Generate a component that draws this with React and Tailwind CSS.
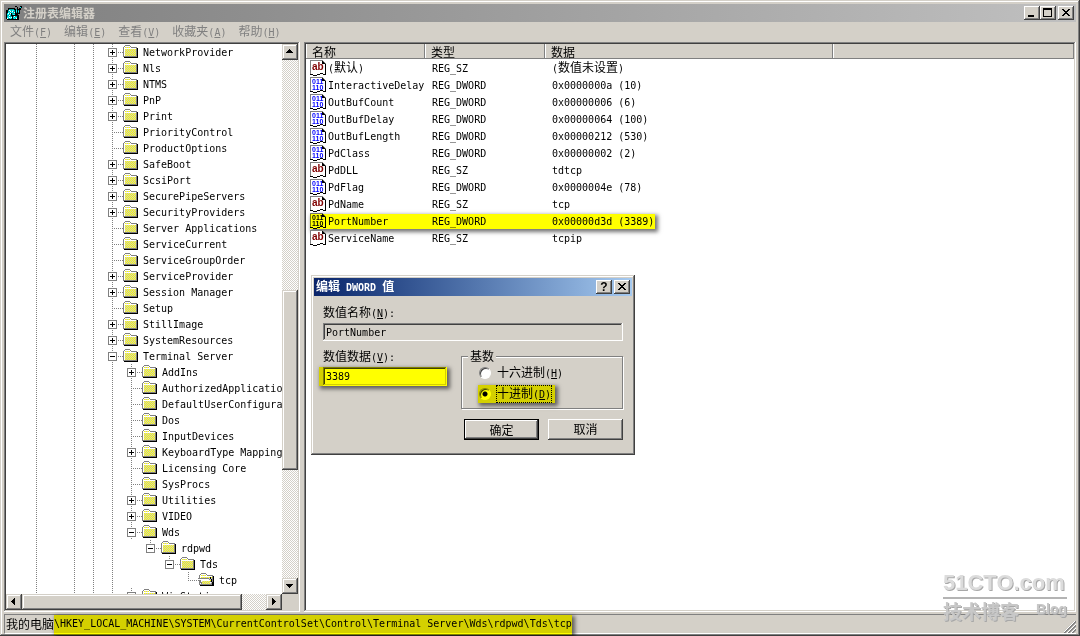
import React, { useState } from "react";

const raised =
  "bg-[#d4d0c8] shadow-[inset_-1px_-1px_#404040,inset_1px_1px_#d4d0c8,inset_-2px_-2px_#808080,inset_2px_2px_#fff]";
const raisedThin =
  "bg-[#d4d0c8] shadow-[inset_-1px_-1px_#404040,inset_1px_1px_#fff,inset_-2px_-2px_#808080]";
const sunken =
  "p-[2px] shadow-[inset_-1px_-1px_#fff,inset_1px_1px_#808080,inset_-2px_-2px_#d4d0c8,inset_2px_2px_#404040]";
const dither =
  "bg-[conic-gradient(#fff_25%,#d4d0c8_0_50%,#fff_0_75%,#d4d0c8_0)] bg-[length:2px_2px]";
const dotsV = "bg-[repeating-linear-gradient(180deg,#808080_0_1px,transparent_1px_2px)]";
const dotsH = "bg-[repeating-linear-gradient(90deg,#808080_0_1px,transparent_1px_2px)]";
const mono = "font-['DejaVu_Sans_Mono','Noto_Sans_CJK_SC',monospace] text-[10px]";
const marker =
  "absolute bg-[#ff0] mix-blend-multiply shadow-[2px_2px_4px_1px_rgba(0,0,0,0.55)] pointer-events-none";

// guides: which ancestor columns carry a line on this row
const A = [1, 0, 1, 1];
const B = [1, 0, 1, 1, 1];
const tree = [
  { name: "NetworkProvider", guides: A, sign: "+" },
  { name: "Nls", guides: A, sign: "+" },
  { name: "NTMS", guides: A, sign: "+" },
  { name: "PnP", guides: A, sign: "+" },
  { name: "Print", guides: A, sign: "+" },
  { name: "PriorityControl", guides: A },
  { name: "ProductOptions", guides: A },
  { name: "SafeBoot", guides: A, sign: "+" },
  { name: "ScsiPort", guides: A, sign: "+" },
  { name: "SecurePipeServers", guides: A, sign: "+" },
  { name: "SecurityProviders", guides: A, sign: "+" },
  { name: "Server Applications", guides: A },
  { name: "ServiceCurrent", guides: A },
  { name: "ServiceGroupOrder", guides: A },
  { name: "ServiceProvider", guides: A, sign: "+" },
  { name: "Session Manager", guides: A, sign: "+" },
  { name: "Setup", guides: A },
  { name: "StillImage", guides: A, sign: "+" },
  { name: "SystemResources", guides: A, sign: "+" },
  { name: "Terminal Server", guides: A, sign: "-" },
  { name: "AddIns", guides: B, sign: "+" },
  { name: "AuthorizedApplications", guides: B },
  { name: "DefaultUserConfiguration", guides: B },
  { name: "Dos", guides: B },
  { name: "InputDevices", guides: B },
  { name: "KeyboardType Mapping", guides: B, sign: "+" },
  { name: "Licensing Core", guides: B },
  { name: "SysProcs", guides: B },
  { name: "Utilities", guides: B, sign: "+" },
  { name: "VIDEO", guides: B, sign: "+" },
  { name: "Wds", guides: B, sign: "-" },
  { name: "rdpwd", guides: [...B, 1], sign: "-", last: true },
  { name: "Tds", guides: [...B, 1, 0], sign: "-", last: true },
  { name: "tcp", guides: [...B, 1, 0, 0], last: true, open: true },
  { name: "WinStations", guides: B, sign: "+" },
];

const values = [
  { name: "(默认)", type: "REG_SZ", data: "(数值未设置)" },
  { name: "InteractiveDelay", type: "REG_DWORD", data: "0x0000000a (10)" },
  { name: "OutBufCount", type: "REG_DWORD", data: "0x00000006 (6)" },
  { name: "OutBufDelay", type: "REG_DWORD", data: "0x00000064 (100)" },
  { name: "OutBufLength", type: "REG_DWORD", data: "0x00000212 (530)" },
  { name: "PdClass", type: "REG_DWORD", data: "0x00000002 (2)" },
  { name: "PdDLL", type: "REG_SZ", data: "tdtcp" },
  { name: "PdFlag", type: "REG_DWORD", data: "0x0000004e (78)" },
  { name: "PdName", type: "REG_SZ", data: "tcp" },
  { name: "PortNumber", type: "REG_DWORD", data: "0x00000d3d (3389)", marked: true },
  { name: "ServiceName", type: "REG_SZ", data: "tcpip" },
];

const menus = [
  ["文件", "F"],
  ["编辑", "E"],
  ["查看", "V"],
  ["收藏夹", "A"],
  ["帮助", "H"],
];

// Chinese runs are 12px wide per character, latin runs 6px
const Txt = ({ children }) => (
  <>
    {children.split(/([\x20-\x7e]+)/).map((part, i) =>
      i % 2 ? (
        <span key={i} className={mono}>
          {part}
        </span>
      ) : (
        part
      )
    )}
  </>
);

const Key = ({ k, tail = "" }) => (
  <span className={mono}>
    (<u>{k}</u>){tail}
  </span>
);

const Arrow = ({ dir }) => {
  const d = {
    up: "M4 9h7v-1h-1v-1h-1v-1h-1v-1h-1v1h-1v1h-1v1h-1z",
    down: "M4 6h7v1h-1v1h-1v1h-1v1h-1v-1h-1v-1h-1v-1h-1z",
    left: "M9 4v7h-1v-1h-1v-1h-1v-1h-1v-1h1v-1h1v-1h1v-1z",
    right: "M6 4v7h1v-1h1v-1h1v-1h1v-1h-1v-1h-1v-1h-1v-1z",
  }[dir];
  return (
    <svg width="16" height="16" shapeRendering="crispEdges">
      <path d={d} />
    </svg>
  );
};

const ScrollButton = ({ dir }) => (
  <button aria-label={dir} className={`size-4 shrink-0 ${raised}`}>
    <Arrow dir={dir} />
  </button>
);

const Folder = ({ open }) => (
  <svg width="16" height="16" className="shrink-0" shapeRendering="crispEdges">
    <defs>
      <pattern id="dither" width="2" height="2" patternUnits="userSpaceOnUse">
        <rect width="2" height="2" fill="#c8c8c8" />
        <rect width="1" height="1" fill="#ff0" />
        <rect x="1" y="1" width="1" height="1" fill="#ff0" />
      </pattern>
    </defs>
    <path d="M2 13h13V4h1v10H2z" fill="#000" />
    <path d="M1 3h1V2h1V1h5v1h1v1h6v10H1z" fill="#808080" />
    <path d="M2 3h1V2h5v1h1v1h5v8H2z" fill="#fff" />
    <path d="M3 3h5v1H3zM3 5h11v7H3z" fill="url(#dither)" />
    {open && (
      <>
        <path d="M0 6h11v1h1v2h1v2h1v2H3v-2H2v-2H1V7H0z" fill="#808080" />
        <path d="M1 7h10v1h1v2h1v2H4v-2H3V8H1z" fill="#fff" />
        <path d="M4 9h8v2h1v1H4z" fill="url(#dither)" />
        <path d="M12 5h1v2h1v3h1v3h-1v-3h-1V7h-1z" fill="#000" />
      </>
    )}
  </svg>
);

const ValueIcon = ({ type }) => (
  <svg width="16" height="16" className="shrink-0" aria-hidden="true">
    <g shapeRendering="crispEdges">
      <path d="M0 0h12l4 4v11h-3v-1h-3v1H7v1H3v-1H0z" fill="#808080" />
      <path d="M1 1h11v3h3v10h-2v-1h-3v1H7v1H3v-1H1z" fill="#fff" />
      <path d="M12 1v3h3v-1h-1v-1h-1v-1zM15 4h1v11h-3v-1h2zM0 14h3v1h4v-1h3v-1h3v1h-3v1H7v1H3v-1H0z" fill="#000" />
    </g>
    {type === "REG_SZ" ? (
      <text x="2" y="10" className="fill-[#800000] font-['Liberation_Sans',sans-serif] text-[10px] font-bold">
        ab
      </text>
    ) : (
      <g className="fill-[#0000ff] font-['Liberation_Sans',sans-serif] text-[7px] font-bold">
        <text x="2" y="7">011</text>
        <text x="2" y="13">110</text>
      </g>
    )}
  </svg>
);

const RegIcon = () => (
  <svg width="16" height="16" shapeRendering="crispEdges" aria-hidden="true">
    <path d="M2 3h7v1h2V2H9V1h2v1h1v2h1V3h1V1h2v2h-1v2h-1v4h-2v1h1v5H1v-1H0V5h2z" fill="#000" />
    <path d="M3 4h5v1H3zM2 5h7v3H2zM1 8h4v3H1zM1 11h5v3H1zM6 8h3v2H6zM7 11h4v3H7zM10 4h1v4h-1zM12 5h1v3h-1zM14 2h1v1h-1z" fill="#00a8a8" />
    <path d="M3 5h2v1H3zM6 5h2v1H6zM2 7h2v1H2zM5 7h2v1H5zM1 9h2v1H1zM4 9h1v1H4zM1 12h2v1H1zM4 12h2v1H4zM7 12h1v1H7zM9 12h2v1H9zM7 9h2v1H7zM10 5h1v2h-1zM12 6h1v1h-1zM14 2h1v1h-1zM2 11h1v1H2zM4 13h1v1H4zM8 13h1v1H8z" fill="#0ff" />
    <path d="M3 5h1v1H3zM6 6h1v1H6zM4 6h1v1H4zM8 7h1v1H8zM2 8h1v1H2zM4 8h1v1H4zM3 10h1v1H3zM5 12h1v1H5zM3 12h1v1H3zM1 13h1v1H1zM8 11h1v1H8zM10 13h1v1h-1z" fill="#fff" />
  </svg>
);

const TreeRow = ({ node }) => {
  const depth = node.guides.length;
  return (
    <li className="flex h-4 items-start whitespace-pre pl-[21px]">
      {node.guides.map((line, i) => (
        // the columns right of the Wds branch stay empty
        <span key={i} className="flex h-4 w-[19px] shrink-0 pl-[9px]">
          {line && !(depth > 5 && i === 5) ? <i className={`h-4 w-px ${dotsV}`} /> : null}
        </span>
      ))}
      <span className="relative h-4 w-[19px] shrink-0">
        <i className={`absolute left-[9px] top-0 w-px ${dotsV} ${node.last ? "h-2" : "h-4"}`} />
        <i className={`absolute left-[9px] top-2 h-px w-[11px] ${dotsH}`} />
        {node.sign && (
          <svg width="9" height="9" className="absolute left-[5px] top-1" shapeRendering="crispEdges">
            <rect width="9" height="9" fill="#808080" />
            <rect x="1" y="1" width="7" height="7" fill="#fff" />
            <path d={node.sign === "+" ? "M2 4h5v1H2zM4 2h1v5H4z" : "M2 4h5v1H2z"} />
          </svg>
        )}
      </span>
      <Folder open={node.open} />
      <span className={`pl-[5px] leading-[18px] ${mono}`}>{node.name}</span>
    </li>
  );
};

const TreePane = () => (
  <aside className={`flex w-[296px] shrink-0 flex-col bg-white ${sunken}`}>
    <div className="flex min-h-0 flex-1">
      <ul className="min-w-0 flex-1 overflow-hidden">
        {tree.map((node) => (
          <TreeRow key={node.name} node={node} />
        ))}
      </ul>
      <div className={`flex w-4 shrink-0 flex-col ${dither}`}>
        <ScrollButton dir="up" />
        <div className="grow-[230]" />
        <div className={`grow-[180] ${raised}`} />
        <div className="grow-[108]" />
        <ScrollButton dir="down" />
      </div>
    </div>
    <div className="flex h-4 shrink-0 bg-[#d4d0c8]">
      <div className={`flex flex-1 ${dither}`}>
        <ScrollButton dir="left" />
        <div className={`grow-[220] ${raised}`} />
        <div className="grow-[24]" />
        <ScrollButton dir="right" />
      </div>
      <div className="w-4" />
    </div>
  </aside>
);

const ValuePane = () => (
  <main className={`min-w-0 flex-1 overflow-hidden bg-white ${sunken}`}>
    <table className="w-full table-fixed border-collapse whitespace-pre text-left leading-4">
      <colgroup>
        <col className="w-[119px]" />
        <col className="w-[120px]" />
        <col className="w-[288px]" />
        <col />
      </colgroup>
      <thead>
        <tr className="h-[15px] bg-[#d4d0c8]">
          {["名称", "类型", "数据", ""].map((title, i) => (
            <th
              key={i}
              className="h-[15px] p-0 pl-[6px] font-normal shadow-[inset_-1px_-1px_#808080,inset_1px_0_#fff]"
            >
              <div className="h-[15px] leading-[15px]">{title}</div>
            </th>
          ))}
        </tr>
      </thead>
      <tbody>
        {values.map((v) => (
          <tr key={v.name} className="h-[17px]">
            <td className="relative p-0">
              <div className="flex h-[17px] items-center pl-1">
                <ValueIcon type={v.type} />
                <span className="pl-[2px]">
                  <Txt>{v.name}</Txt>
                </span>
              </div>
              {v.marked && <i className={`left-1 top-[2px] h-[15px] w-[345px] ${marker}`} />}
            </td>
            <td className="p-0 pl-[7px]">
              <div className="h-[17px] leading-4">
                <Txt>{v.type}</Txt>
              </div>
            </td>
            <td className="p-0 pl-[7px]">
              <div className="h-[17px] leading-4">
                <Txt>{v.data}</Txt>
              </div>
            </td>
            <td />
          </tr>
        ))}
      </tbody>
    </table>
  </main>
);

const EditDialog = () => {
  const [value, setValue] = useState("3389");
  const [base, setBase] = useState("dec");
  const radio =
    "size-3 appearance-none rounded-full border border-[#808080] border-r-white border-b-white bg-white shadow-[inset_1px_1px_#404040] checked:bg-[radial-gradient(circle,#000_2px,#fff_3px)]";

  return (
    <section
      role="dialog"
      aria-label="编辑 DWORD 值"
      className={`absolute left-[311px] top-[275px] h-[180px] w-[324px] p-[3px] ${raised}`}
    >
      <header className="flex h-[18px] items-center bg-linear-to-r from-[#0a246a] to-[#a6caf0] pl-[2px] pr-[2px]">
        <h2 className="flex-1 whitespace-pre font-bold leading-[18px] text-white">
          <Txt>编辑 DWORD 值</Txt>
        </h2>
        <button
          aria-label="帮助"
          className={`mr-[2px] h-[14px] w-4 font-['Liberation_Sans',sans-serif] text-[12px] font-bold leading-[14px] ${raisedThin}`}
        >
          ?
        </button>
        <button aria-label="关闭" className={`h-[14px] w-4 ${raisedThin}`}>
          <CloseMark />
        </button>
      </header>
      <form className="px-[9px] pt-2 leading-4" onSubmit={(e) => e.preventDefault()}>
        <label htmlFor="valueName" className="block h-4">
          数值名称
          <Key k="N" tail=":" />
        </label>
        <input
          id="valueName"
          readOnly
          value="PortNumber"
          className={`mt-[3px] block h-[18px] w-full bg-transparent pl-[3px] outline-none ${sunken} ${mono}`}
        />
        <div className="mt-[7px] flex">
          <div className="w-[138px]">
            <label htmlFor="valueData" className="block h-4">
              数值数据
              <Key k="V" tail=":" />
            </label>
            <div className="relative mt-[3px] w-[124px]">
              <input
                id="valueData"
                value={value}
                onChange={(e) => setValue(e.target.value)}
                className={`block h-[19px] w-full bg-white pl-[3px] outline-none ${sunken} ${mono}`}
              />
              <i className={`-left-1 right-0 top-0 h-[19px] ${marker}`} />
            </div>
          </div>
          <fieldset className="h-[61px] flex-1 border border-[#808080] pl-[17px] shadow-[inset_1px_1px_#fff,1px_1px_#fff]">
            <legend className="-ml-[11px] h-4 bg-[#d4d0c8] px-[2px]">基数</legend>
            <label className="flex h-[18px] items-center gap-[5px]">
              <input
                type="radio"
                name="base"
                checked={base === "hex"}
                onChange={() => setBase("hex")}
                className={radio}
              />
              <span className="px-px">
                十六进制
                <Key k="H" />
              </span>
            </label>
            <label className="relative mt-[3px] flex h-[18px] w-[76px] items-center gap-[5px]">
              <input
                type="radio"
                name="base"
                checked={base === "dec"}
                onChange={() => setBase("dec")}
                className={radio}
              />
              <span className="outline-1 outline-dotted outline-black -outline-offset-1 px-px">
                十进制
                <Key k="D" />
              </span>
              <i className={`-left-px top-0 h-[18px] w-[77px] ${marker}`} />
            </label>
          </fieldset>
        </div>
        <div className="mt-[10px] flex justify-end gap-[9px]">
          <button className="h-[21px] w-[75px] border border-black bg-[#d4d0c8] leading-4 shadow-[inset_-1px_-1px_#404040,inset_1px_1px_#fff,inset_-2px_-2px_#808080]">
            确定
          </button>
          <button className={`h-[21px] w-[75px] pb-[2px] leading-4 ${raisedThin}`}>取消</button>
        </div>
      </form>
    </section>
  );
};

const CloseMark = () => (
  <svg width="16" height="14" shapeRendering="crispEdges">
    <path d="M4 3h2v1h1v1h2v-1h1v-1h2v1h-1v1h-1v1h-1v1h1v1h1v1h1v1h-2v-1h-1v-1h-2v1h-1v1h-2v-1h1v-1h1v-1h1v-1h-1v-1h-1v-1h-1z" />
  </svg>
);

const Watermark = () => (
  <div className="pointer-events-none absolute bottom-[9px] right-[13px] w-[124px] font-['Liberation_Sans','Noto_Sans_CJK_SC',sans-serif] font-bold text-[#dcdcdc] [text-shadow:1px_1px_#a8a8a8]">
    <div className="whitespace-nowrap text-[22px] leading-7">51CTO.com</div>
    <div className="h-[2px] bg-[#b4b4b4]" />
    <div className="flex justify-between text-[#c8c8c8]">
      <span className="text-[19px] leading-7">技术博客</span>
      <span className="text-[14px] leading-5">Blog</span>
    </div>
  </div>
);

const App = () => {
  return (
    <div
      className="relative flex h-screen w-full flex-col overflow-hidden bg-[#d4d0c8] p-1 pb-[2px] font-['Noto_Sans_CJK_SC',sans-serif] text-[12px] text-black shadow-[inset_-1px_-1px_#404040,inset_1px_1px_#d4d0c8,inset_-2px_-2px_#808080,inset_2px_2px_#fff]"
    >
      <header className="flex h-[18px] shrink-0 items-center bg-linear-to-r from-[#808080] to-[#c0c0c0] px-[2px]">
        <RegIcon />
        <h1 className="flex-1 pl-px font-bold leading-[18px] text-[#d4d0c8]">注册表编辑器</h1>
        <button aria-label="最小化" className={`h-[14px] w-4 ${raisedThin}`}>
          <svg width="16" height="14" shapeRendering="crispEdges">
            <path d="M4 9h6v2H4z" />
          </svg>
        </button>
        <button aria-label="最大化" className={`mr-[2px] h-[14px] w-4 ${raisedThin}`}>
          <svg width="16" height="14" shapeRendering="crispEdges">
            <path d="M3 2h9v9H3zM4 4v6h7V4z" fillRule="evenodd" />
          </svg>
        </button>
        <button aria-label="关闭" className={`h-[14px] w-4 ${raisedThin}`}>
          <CloseMark />
        </button>
      </header>

      <nav className="flex h-5 shrink-0 items-center text-[#808080]">
        {menus.map(([label, k]) => (
          <button key={k} className="px-[6px] leading-5">
            {label}
            <Key k={k} />
          </button>
        ))}
      </nav>

      <div className="flex min-h-0 flex-1 gap-1">
        <TreePane />
        <ValuePane />
      </div>

      <footer className="relative mt-[2px] flex h-5 shrink-0 whitespace-pre border-b border-l border-t border-[#808080] border-b-white pl-px leading-[18px]">
        <span>我的电脑</span>
        <span className={`relative ${mono}`}>
          \HKEY_LOCAL_MACHINE\SYSTEM\CurrentControlSet\Control\Terminal Server\Wds\rdpwd\Tds\tcp
          <i className={`left-0 right-0 top-0 h-5 ${marker}`} />
        </span>
        <svg width="12" height="12" className="absolute bottom-0 right-0">
          <path d="M0 12L12 0M4 12L12 4M8 12L12 8" stroke="#808080" strokeWidth="2" />
          <path d="M-1 12L12 -1M3 12L12 3M7 12L12 7" stroke="#fff" />
        </svg>
      </footer>

      <EditDialog />
      <Watermark />
    </div>
  );
};

export default App;
